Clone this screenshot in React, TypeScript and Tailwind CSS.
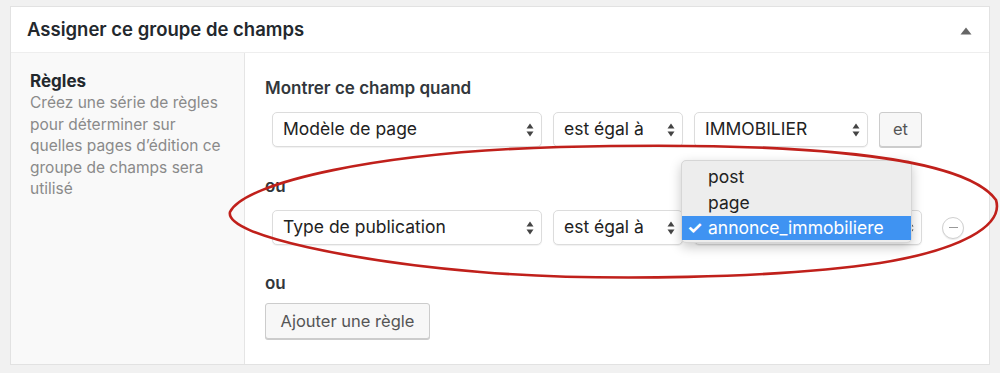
import React from "react";

const font = { fontFamily: "Inter, 'Liberation Sans', sans-serif" };

function Arrows() {
  return (
    <svg width="8" height="14" viewBox="0 0 8 14" className="shrink-0">
      <path d="M4 0.5 L7.5 5.5 L0.5 5.5 Z" fill="#444" />
      <path d="M4 13.5 L7.5 8.5 L0.5 8.5 Z" fill="#444" />
    </svg>
  );
}

function Select({ label, w }: { label: string; w: string }) {
  return (
    <div
      className={`${w} h-[35px] flex items-center justify-between rounded-[5px] border border-[#dcdcdc] bg-white pl-[10px] pr-[7px] shadow-[0_1px_1px_rgba(0,0,0,0.06)]`}
    >
      <span className="text-[17.5px] text-[#222] whitespace-nowrap">{label}</span>
      <Arrows />
    </div>
  );
}

export default function App() {
  return (
    <div className="w-[1000px] h-[373px] bg-[#f1f1f1] pt-[6px] pl-[10px] relative overflow-hidden" style={font}>
      <div className="w-[980px] h-[359px] bg-white border border-[#e2e2e2] flex flex-col">
        <div className="h-[46px] flex items-center justify-between pl-[16px] pr-[16px] border-b border-[#eeeeee] shrink-0">
          <span className="text-[18.5px] font-semibold text-[#23282d]">Assigner ce groupe de champs</span>
          <svg width="12" height="8" viewBox="0 0 12 8" className="mt-[2px] mr-[1px]">
            <path d="M6 0.5 L11.5 7.5 L0.5 7.5 Z" fill="#666" />
          </svg>
        </div>
        <div className="flex flex-1">
          <div className="w-[234px] bg-[#f9f9f9] border-r border-[#e5e5e5] pl-[19px] pt-[17px] shrink-0">
            <div className="text-[17px] font-bold text-[#23282d] leading-[22px]">Règles</div>
            <div className="text-[15.5px] text-[#8a8a8a] leading-[21.5px] w-[196px]">
              Créez une série de règles pour déterminer sur quelles pages d’édition ce groupe de champs sera utilisé
            </div>
          </div>
          <div className="flex-1 pl-[20px] pt-[24px]">
            <div className="text-[17px] font-semibold text-[#32373c] leading-[22px]">Montrer ce champ quand</div>
            <div className="mt-[13px] ml-[7px] flex items-center gap-[11px]">
              <Select label="Modèle de page" w="w-[270px]" />
              <Select label="est égal à" w="w-[130px]" />
              <Select label="IMMOBILIER" w="w-[174px]" />
              <div className="h-[35px] w-[43px] flex items-center justify-center rounded-[3px] border border-[#cccccc] bg-[#f7f7f7] shadow-[0_1px_0_#cccccc] text-[16.5px] text-[#555]">
                et
              </div>
            </div>
            <div className="mt-[28px] text-[17px] font-semibold text-[#32373c] leading-[22px]">ou</div>
            <div className="mt-[13px] ml-[7px] flex items-center gap-[11px]">
              <Select label="Type de publication" w="w-[270px]" />
              <Select label="est égal à" w="w-[130px]" />
              <div className="relative">
                <Select label="" w="w-[228px]" />
                <div className="absolute left-[-13px] top-[-50px] w-[231px] h-[83px] rounded-[5px] bg-[#ededed] border border-[#d6d6d6] shadow-[0_4px_12px_rgba(0,0,0,0.22)] pt-[3px] z-10">
                  <div className="h-[26px] flex items-center pl-[26px] text-[17.5px] text-[#222]">post</div>
                  <div className="h-[26px] flex items-center pl-[26px] text-[17.5px] text-[#222]">page</div>
                  <div className="h-[24px] flex items-center bg-[#3f93f2] text-white text-[17.5px]">
                    <span className="w-[26px] pl-[5px] font-bold">✓</span>
                    <span>annonce_immobiliere</span>
                  </div>
                </div>
              </div>
              <div className="ml-[9px] w-[22px] h-[22px] rounded-full border border-[#d0d0d0] bg-white flex items-center justify-center shadow-[0_1px_1px_rgba(0,0,0,0.08)]">
                <div className="w-[9px] h-[1.5px] bg-[#999]" />
              </div>
            </div>
            <div className="mt-[27px] text-[17px] font-semibold text-[#32373c] leading-[22px]">ou</div>
            <div className="mt-[9px] w-[165px] h-[36px] flex items-center justify-center rounded-[3px] border border-[#cccccc] bg-[#f7f7f7] shadow-[0_1px_0_#cccccc] text-[16.5px] text-[#555]">
              Ajouter une règle
            </div>
          </div>
        </div>
      </div>
      <svg className="absolute left-0 top-0 pointer-events-none z-20" width="1000" height="373" viewBox="0 0 1000 373">
        <path
          d="M 230 212 C 245 182, 380 152, 560 147 C 760 142, 960 150, 996 200 C 1004 226, 960 250, 880 263 C 780 278, 600 282, 480 272 C 360 262, 224 236, 230 212 Z"
          fill="none"
          stroke="#c0201b"
          strokeWidth="2.6"
        />
      </svg>
    </div>
  );
}
